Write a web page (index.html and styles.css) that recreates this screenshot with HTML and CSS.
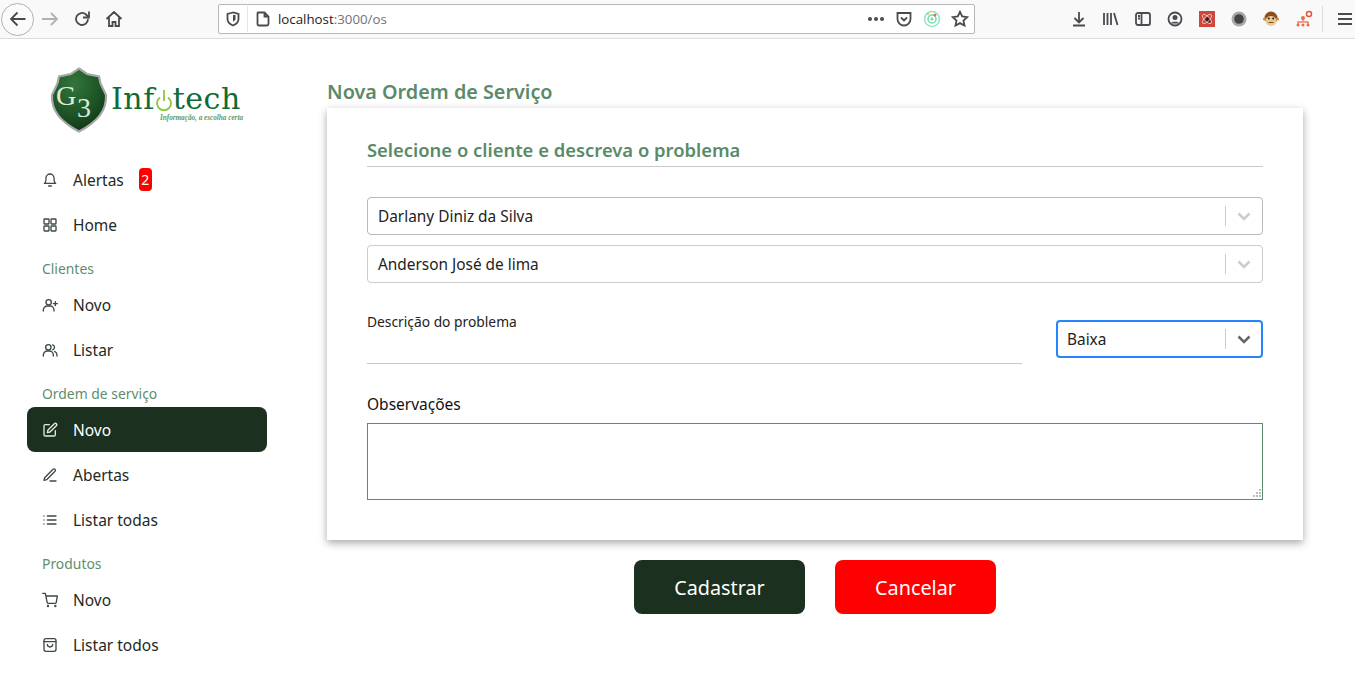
FILE: index.html
```html
<!DOCTYPE html>
<html lang="pt-BR">
<head>
<meta charset="utf-8">
<title>Nova Ordem de Serviço</title>
<link rel="stylesheet" href="styles.css">
</head>
<body>
<header class="browser">
  <button class="back"><svg width="20" height="20" viewBox="0 0 20 20"><path d="M17.5 10H3M9.5 3.5 3 10l6.500 6.500" class="ic-dark"/></svg></button>
  <svg class="tb" width="18" height="18" viewBox="0 0 18 18"><path d="M1 9h15M10 3l6 6-6 6" class="ic-grey"/></svg>
  <svg class="tb reload" width="18" height="18" viewBox="0 0 18 18"><path d="M15 9a6 6 0 1 1-2-4.500L15.500 7" class="ic-dark"/><path d="M16 1.500V7.500H10" class="ic-dark"/></svg>
  <svg class="tb home" width="18" height="18" viewBox="0 0 18 18"><path d="M1.500 9 9 2l7.500 7M4 7.500V16h3.500v-4h3v4H14V7.500" class="ic-dark"/></svg>
  <div class="urlbar">
    <svg class="shield" width="16" height="16" viewBox="0 0 16 16"><path d="M8 1.500 2.500 3v5c0 3.500 3 5.500 5.500 6.500 2.500-1 5.500-3 5.500-6.500V3z" class="ic-dark"/><path d="M8 4h2.500v4.500L8 11z" fill="#4a4a4f"/></svg>
    <span class="urlsep"></span>
    <svg class="page" width="16" height="16" viewBox="0 0 16 16"><path d="M3 1.500h6.500L13.500 5.500V13a1.500 1.500 0 0 1-1.500 1.500H4A1.500 1.500 0 0 1 2.500 13V2z M9.500 1.500v4h4" class="ic-dark"/></svg>
    <span class="url">localhost<span class="url-dim">:3000/os</span></span>
    <span class="dots"><i></i><i></i><i></i></span>
    <svg class="pocket" width="16" height="16" viewBox="0 0 16 16"><path d="M1.500 2h13v6a6.500 6.500 0 0 1-13 0z" class="ic-dark"/><path d="M5 6.500l3 3 3-3" class="ic-dark"/></svg>
    <svg class="radar" width="18" height="18" viewBox="0 0 18 18"><circle cx="9" cy="9" r="7.500" fill="none" stroke="#8fe8c0" stroke-width="1.500"/><circle cx="9" cy="9" r="4" fill="none" stroke="#6fdcaa" stroke-width="1.500"/><circle cx="9" cy="9" r="1.500" fill="#6fdcaa"/><circle cx="12" cy="5" r="1.500" fill="#ef6a4a"/><circle cx="5" cy="4" r="1" fill="#f0a060"/></svg>
    <svg class="star" width="18" height="18" viewBox="0 0 18 18"><path d="M9 1.800l2.200 4.700 5 .6-3.700 3.500 1 5L9 13.100l-4.500 2.500 1-5L1.800 7.100l5-.6z" class="ic-dark"/></svg>
  </div>
  <div class="tools">
    <svg width="16" height="16" viewBox="0 0 16 16"><path d="M8 1v10M3.500 7 8 11.500 12.500 7M2 14.500h12" class="ic-dark"/></svg>
    <svg width="16" height="16" viewBox="0 0 16 16"><path d="M1 2v12M4.500 2v12M8 2v12M11 2l3.500 12" class="ic-dark"/></svg>
    <svg width="16" height="16" viewBox="0 0 16 16"><rect x="1" y="2" width="14" height="12" rx="2" class="ic-dark"/><path d="M6.500 2v12M3 5h2M3 7.500h2" class="ic-dark"/></svg>
    <svg width="16" height="16" viewBox="0 0 16 16"><circle cx="8" cy="8" r="6.500" class="ic-dark"/><circle cx="8" cy="6.500" r="2.500" fill="#4a4a4f"/><path d="M3.500 12.500c1-2.500 8-2.500 9 0" fill="#4a4a4f"/></svg>
    <svg width="16" height="16" viewBox="0 0 16 16"><rect width="16" height="16" fill="#d0463a"/><circle cx="9" cy="9" r="2.800" fill="#3a2020"/><ellipse cx="8" cy="8" rx="6" ry="2.500" fill="none" stroke="#f4d8d4" stroke-width=".8" transform="rotate(45 8 8)"/><ellipse cx="8" cy="8" rx="6" ry="2.500" fill="none" stroke="#f4d8d4" stroke-width=".8" transform="rotate(-45 8 8)"/></svg>
    <svg width="16" height="16" viewBox="0 0 16 16"><circle cx="8" cy="8" r="7.500" fill="#a8a8a8"/><circle cx="8" cy="8" r="4.800" fill="#444"/></svg>
    <svg width="16" height="16" viewBox="0 0 16 16"><circle cx="8" cy="7" r="6.500" fill="#8a4f1d"/><circle cx="1.500" cy="8" r="1.500" fill="#c98a4a"/><circle cx="14.500" cy="8" r="1.500" fill="#c98a4a"/><ellipse cx="8" cy="10" rx="5.500" ry="5" fill="#e8cb90"/><circle cx="5.800" cy="7.500" r="1" fill="#222"/><circle cx="10.200" cy="7.500" r="1" fill="#222"/><path d="M5.500 11.500h5" stroke="#7a4a20" fill="none"/></svg>
    <svg width="18" height="18" viewBox="0 0 18 18"><circle cx="14" cy="4" r="2.500" fill="#fff" stroke="#e8503a" stroke-width="1.500"/><path d="M8 8v3M3 15v-3h10v3" fill="none" stroke="#f08060" stroke-width="1.500"/><circle cx="8" cy="8" r="2" fill="#f06a4a"/><circle cx="3" cy="15" r="1.500" fill="#f06a4a"/><circle cx="8" cy="15" r="1.500" fill="#f06a4a"/><circle cx="13" cy="15" r="1.500" fill="#f06a4a"/></svg>
  </div>
  <span class="toolsep"></span>
  <svg class="menu" width="16" height="16" viewBox="0 0 16 16"><path d="M1 3h14M1 8h14M1 13h14" class="ic-dark" stroke-width="2"/></svg>
</header>

<div class="app">
  <aside class="sidebar">
    <div class="logo">
      <svg class="shield-logo" width="60" height="66" viewBox="0 0 60 66">
        <defs><radialGradient id="sg" cx=".4" cy=".25" r=".85"><stop offset="0" stop-color="#33753a"/><stop offset=".6" stop-color="#1c5224"/><stop offset="1" stop-color="#0c2c10"/></radialGradient></defs>
        <path d="M30 1.500 38 7l12 2.500 1.500 7L57 28c1 16-9 27-27 36.500C12 55 2 44 3 28l5.500-11.500L10 9.500 22 7z" fill="url(#sg)" stroke="#a6a8a6" stroke-width="2.200"/>
        <text x="7" y="38" class="logo-g">G</text>
        <text x="28" y="50" class="logo-3">3</text>
      </svg>
      <div class="logo-text">
        <div class="logo-name">Inf<svg class="power" width="18" height="24" viewBox="0 0 18 24"><path d="M5 10.500a7 7 0 1 0 8 0" fill="none" stroke="#8cc63f" stroke-width="1.800"/><path d="M9 3v11" stroke="#8cc63f" stroke-width="1.800"/></svg>tech</div>
        <div class="logo-sub">Informação, a escolha certa</div>
      </div>
    </div>
    <nav class="nav">
      <a class="item"><svg class="ico" viewBox="0 0 24 24"><path d="M18 9a6 6 0 0 0-12 0c0 7-2.500 8-2.500 8h17S18 16 18 9M10 21h4"/></svg>Alertas<span class="badge">2</span></a>
      <a class="item"><svg class="ico" viewBox="0 0 24 24"><rect x="3" y="3" width="7.500" height="7.500" rx="1"/><rect x="13.500" y="3" width="7.500" height="7.500" rx="1"/><rect x="3" y="13.500" width="7.500" height="7.500" rx="1"/><rect x="13.500" y="13.500" width="7.500" height="7.500" rx="1"/></svg>Home</a>
      <div class="section">Clientes</div>
      <a class="item"><svg class="ico" viewBox="0 0 24 24"><circle cx="10" cy="8" r="4"/><path d="M2 21v-1.500a6 6 0 0 1 6-6h4a6 6 0 0 1 6 6V21M20 7v6M17 10h6"/></svg>Novo</a>
      <a class="item"><svg class="ico" viewBox="0 0 24 24"><circle cx="9.500" cy="8" r="4"/><path d="M2 21v-1.500a6 6 0 0 1 6-6h3a6 6 0 0 1 6 6V21M16 4.200a4 4 0 0 1 0 7.600M19 14a6 6 0 0 1 3.500 5.500V21"/></svg>Listar</a>
      <div class="section">Ordem de serviço</div>
      <a class="item active"><svg class="ico" viewBox="0 0 24 24"><path d="M11 4H5a2 2 0 0 0-2 2v13a2 2 0 0 0 2 2h13a2 2 0 0 0 2-2v-6M18.500 2.500a2.100 2.100 0 0 1 3 3L12 15l-4 1 1-4z"/></svg>Novo</a>
      <a class="item"><svg class="ico" viewBox="0 0 24 24"><path d="M12 21h9M16.500 3.500a2.100 2.100 0 0 1 3 3L7 19l-4 1 1-4z"/></svg>Abertas</a>
      <a class="item"><svg class="ico" viewBox="0 0 24 24"><path d="M8 6h13M8 12h13M8 18h13M3 6h.01M3 12h.01M3 18h.01"/></svg>Listar todas</a>
      <div class="section">Produtos</div>
      <a class="item"><svg class="ico" viewBox="0 0 24 24"><circle cx="9" cy="21" r=".8"/><circle cx="20" cy="21" r=".8"/><path d="M1 2h4l2.700 13.400a2 2 0 0 0 2 1.600h9.700a2 2 0 0 0 2-1.600L23 6H6"/></svg>Novo</a>
      <a class="item"><svg class="ico" viewBox="0 0 24 24"><rect x="3" y="2.500" width="18" height="19" rx="3"/><path d="M3 7h18M8 11a4 4 0 0 0 8 0"/></svg>Listar todos</a>
    </nav>
  </aside>

  <main class="main">
    <h1 class="title">Nova Ordem de Serviço</h1>
    <section class="card">
      <h2 class="card-title">Selecione o cliente e descreva o problema</h2>
      <div class="select first"><span class="value">Darlany Diniz da Silva</span><span class="sep"></span><svg class="chev" viewBox="0 0 20 20"><path d="M4.500 7.500 10 13l5.500-5.500"/></svg></div>
      <div class="select second"><span class="value">Anderson José de lima</span><span class="sep"></span><svg class="chev" viewBox="0 0 20 20"><path d="M4.500 7.500 10 13l5.500-5.500"/></svg></div>
      <div class="row">
        <label class="field"><span class="field-label">Descrição do problema</span></label>
        <div class="select focused"><span class="value">Baixa</span><span class="sep"></span><svg class="chev" viewBox="0 0 20 20"><path d="M4.500 7.500 10 13l5.500-5.500"/></svg></div>
      </div>
      <div class="obs-label">Observações</div>
      <div class="obs-wrap">
        <textarea class="obs"></textarea>
        <svg class="grip" width="9" height="9" viewBox="0 0 9 9"><path d="M6 0h2v2H6zM3 3h2v2H3zM6 3h2v2H6zM0 6h2v2H0zM3 6h2v2H3zM6 6h2v2H6z" fill="#bdbdbd"/></svg>
      </div>
    </section>
    <div class="actions">
      <button class="btn save">Cadastrar</button>
      <button class="btn cancel">Cancelar</button>
    </div>
  </main>
</div>
</body>
</html>
```
FILE: styles.css
```css
* { box-sizing: border-box; }
html, body { margin: 0; height: 100%; }
body { background: #fff; font-family: "Noto Sans", "Open Sans", sans-serif; color: #1f2a24; overflow: hidden; }

.ic-dark { fill: none; stroke: #4a4a4f; stroke-width: 1.800; }
.ic-grey { fill: none; stroke: #b1b1b3; stroke-width: 1.800; }

.browser { height: 39px; background: #f9f9fa; border-bottom: 1px solid #dcdcde; display: flex; align-items: center; padding-left: 1px; }
.browser svg { flex: none; display: block; }
.back { width: 33px; height: 33px; flex: none; border: 1px solid #b1b1b3; border-radius: 50%; background: #fbfbfb; padding: 0; display: flex; align-items: center; justify-content: center; margin-right: 7px; }
.tb { margin-right: 14px; }
.tb.home { margin-right: 0; }
.urlbar { width: 757px; flex: none; height: 30px; margin-left: 95px; background: #fff; border: 1px solid #b8b8ba; border-radius: 2px; display: flex; align-items: center; padding: 0 5px 0 6px; }
.urlsep { width: 1px; height: 26px; background: #e4e4e6; margin: 0 7px 0 6px; }
.page { margin-right: 7px; }
.url { font-family: "Open Sans", sans-serif; font-size: 13.300px; color: #1c1c1e; flex: 1; }
.url-dim { color: #737373; }
.dots { display: flex; gap: 2px; margin-right: 12px; }
.dots i { width: 4px; height: 4px; border-radius: 50%; background: #4a4a4f; }
.pocket { margin-right: 11px; }
.radar { margin-right: 10px; }
.tools { display: flex; align-items: center; gap: 16px; margin-left: 96px; width: 251px; flex: none; }
.toolsep { width: 1px; height: 26px; background: #dcdcde; flex: none; }
.menu { margin-left: 14px; }

.app { display: flex; height: 650px; }
.sidebar { width: 300px; flex: none; padding: 28px 0 0 27px; }
.logo { display: flex; align-items: flex-start; width: 240px; padding-left: 22px; height: 90px; }
.shield-logo { flex: none; }
.logo-g, .logo-3 { font-family: "Liberation Serif", serif; fill: #dfe8df; stroke: none; font-size: 28px; }
.logo-text { margin: 16px 0 0 2px; width: 132px; flex: none; }
.logo-name { font-family: "DejaVu Serif", serif; font-size: 30px; line-height: 31px; color: #0e6b34; display: flex; align-items: center; white-space: nowrap; letter-spacing: .5px; }
.power { flex: none; }
.logo-sub { font-family: "Liberation Serif", serif; font-style: italic; font-weight: bold; font-size: 7.200px; line-height: 8px; color: #5f9a62; text-align: right; white-space: nowrap; }

.nav { width: 240px; }
.item { height: 45px; display: flex; align-items: center; padding-left: 15px; font-size: 15.500px; color: #1f2a24; border-radius: 8px; }
.ico { width: 16px; height: 16px; margin-right: 15px; flex: none; fill: none; stroke: #3c4a40; stroke-width: 2; stroke-linecap: round; stroke-linejoin: round; }
.active { background: #1b301e; color: #fff; }
.active .ico { stroke: #e6e9e6; }
.badge { background: #f00; color: #fff; width: 13px; height: 23px; border-radius: 4px; display: flex; align-items: center; justify-content: center; font-size: 14px; margin-left: 15px; }
.section { height: 35px; padding: 13px 0 0 15px; font-size: 13.900px; line-height: 18px; color: #5f8d6c; }

.main { width: 976px; margin-left: 27px; padding-top: 40px; }
.title { margin: 0; font-size: 19.800px; line-height: 26px; height: 29px; font-weight: 600; color: #5b8a69; }
.card { height: 432px; background: #fff; padding: 30px 40px 0; box-shadow: 0 3px 8px rgba(0, 0, 0, .35); }
.card-title { margin: 0 0 30px; height: 29px; font-size: 18.400px; line-height: 23px; font-weight: 600; color: #5b8a69; border-bottom: 1px solid #c8c8c8; }
.select { height: 38px; display: flex; align-items: center; border: 1px solid #b8b8b8; border-radius: 4px; background: #fff; padding: 0 8px 0 10px; }
.select.second { margin-top: 10px; border-color: #cccccc; }
.value { flex: 1; font-size: 15.400px; color: #222; }
.sep { width: 1px; height: 20px; background: #cccccc; }
.chev { width: 20px; height: 20px; margin-left: 8px; fill: none; stroke: #cccccc; stroke-width: 2.500; }
.row { display: flex; justify-content: space-between; margin-top: 37px; height: 44px; }
.field { width: 655px; height: 44px; border-bottom: 1px solid #c8c8c8; font-size: 13.800px; }
.field-label { display: block; line-height: 18px; margin-top: -7px; color: #222; }
.select.focused { width: 207px; border: 2px solid #2684ff; padding: 0 7px 0 9px; }
.focused .chev { stroke: #666; }
.obs-label { margin-top: 30px; font-size: 15.500px; line-height: 20px; color: #111; }
.obs-wrap { position: relative; margin-top: 9px; height: 77px; }
.obs { display: block; width: 100%; height: 77px; border: 1px solid #5f8d6c; background: #fff; outline: none; resize: none; }
.grip { position: absolute; right: 1px; bottom: 2px; }
.actions { display: flex; justify-content: center; gap: 30px; margin-top: 20px; }
.btn { height: 54px; border: 0; border-radius: 8px; color: #fff; font-family: inherit; font-size: 19.800px; padding: 0; }
.save { width: 171px; background: #1b301e; }
.cancel { width: 161px; background: #f00; }
```
